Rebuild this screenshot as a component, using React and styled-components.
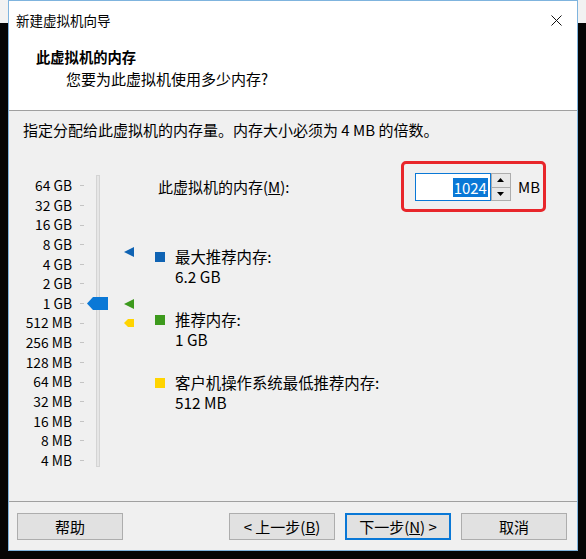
import styled, { createGlobalStyle } from "styled-components";

const ROW = 19.64;
const SCALE = ["64 GB", "32 GB", "16 GB", "8 GB", "4 GB", "2 GB", "1 GB", "512 MB", "256 MB", "128 MB", "64 MB", "32 MB", "16 MB", "8 MB", "4 MB"];

// position on the scale from a size in GB (64 GB at the top)
const posFor = (gb) => (6 - Math.log2(gb)) * ROW + ROW / 2;

const MARKERS = [
  { gb: 6.2, color: "#0f63b3", shape: "tri" },
  { gb: 1, color: "#3d9a1d", shape: "tri" },
  { gb: 0.5, color: "#ffd400", shape: "flag" },
];

const LEGEND = [
  { color: "#0f63b3", label: "最大推荐内存:", value: "6.2 GB" },
  { color: "#3d9a1d", label: "推荐内存:", value: "1 GB" },
  { color: "#ffd400", label: "客户机操作系统最低推荐内存:", value: "512 MB" },
];

export default function App() {
  return (
    <Page>
      <GlobalStyle />
      <Window>
        <Header>
          <TitleBar>
            <span>新建虚拟机向导</span>
            <CloseIcon width="11" height="11" viewBox="0 0 11 11">
              <path d="M0.5 0.5 L10.5 10.5 M10.5 0.5 L0.5 10.5" stroke="#111" strokeWidth="1" fill="none" />
            </CloseIcon>
          </TitleBar>
          <HeaderTitle>此虚拟机的内存</HeaderTitle>
          <HeaderSub>您要为此虚拟机使用多少内存?</HeaderSub>
        </Header>

        <Content>
          <Instruction>指定分配给此虚拟机的内存量。内存大小必须为 4 MB 的倍数。</Instruction>
          <Main>
            <SliderBlock>
              <ScaleList>
                {SCALE.map((s) => (
                  <ScaleRow key={s}>
                    <ScaleLabel>{s}</ScaleLabel>
                    <Tick />
                  </ScaleRow>
                ))}
              </ScaleList>
              <TrackWrap>
                <Track />
                <Thumb width="21" height="13" viewBox="0 0 21 13" style={{ top: posFor(1) - 6.5 }}>
                  <polygon points="0,6.5 6,0 21,0 21,13 6,13" fill="#0a78d6" />
                </Thumb>
              </TrackWrap>
              <MarkerCol>
                {MARKERS.map((m) => (
                  <Marker key={m.gb} width="10" height="10" viewBox="0 0 10 10" style={{ top: posFor(m.gb) - 5 }}>
                    <polygon
                      points={m.shape === "tri" ? "0,5 10,0 10,10" : "0,5 4,1 10,1 10,9 4,9"}
                      fill={m.color}
                    />
                  </Marker>
                ))}
              </MarkerCol>
            </SliderBlock>

            <RightCol>
              <MemoryRow>
                <MemoryLabel>
                  此虚拟机的内存(<u>M</u>):
                </MemoryLabel>
                <InputGroup>
                  <Highlight />
                  <NumberBox>
                    <Selected>1024</Selected>
                  </NumberBox>
                  <Spin>
                    <SpinBtn>
                      <svg width="7" height="4" viewBox="0 0 7 4">
                        <polygon points="0,4 3.5,0 7,4" fill="#000" />
                      </svg>
                    </SpinBtn>
                    <SpinBtn>
                      <svg width="7" height="4" viewBox="0 0 7 4">
                        <polygon points="0,0 7,0 3.5,4" fill="#000" />
                      </svg>
                    </SpinBtn>
                  </Spin>
                  <Unit>MB</Unit>
                </InputGroup>
              </MemoryRow>

              <Legend>
                {LEGEND.map((l) => (
                  <LegendItem key={l.label}>
                    <Swatch color={l.color} />
                    <div>
                      <div>{l.label}</div>
                      <div>{l.value}</div>
                    </div>
                  </LegendItem>
                ))}
              </Legend>
            </RightCol>
          </Main>
        </Content>

        <Footer>
          <Button>帮助</Button>
          <ButtonGroup>
            <Button>
              &lt; 上一步(<u>B</u>)
            </Button>
            <Button focused>
              下一步(<u>N</u>) &gt;
            </Button>
            <Button>取消</Button>
          </ButtonGroup>
        </Footer>
      </Window>
    </Page>
  );
}

const GlobalStyle = createGlobalStyle`
  body {
    margin: 0;
    font-family: "Microsoft YaHei UI", "Noto Sans CJK SC", sans-serif;
    font-size: 15px;
    color: #000;
  }
`;

const Page = styled.div`
  width: 586px;
  height: 559px;
  overflow: hidden;
  background: linear-gradient(#f2f2f2 0, #f2f2f2 23px, #050505 23px);
`;

const Window = styled.div`
  margin-left: 8px;
  width: 570px;
  height: 551px;
  box-sizing: border-box;
  border: 1px solid #7fb4de;
  background: #f0f0f0;
  display: flex;
  flex-direction: column;
`;

const Header = styled.div`
  background: #fff;
  height: 109px;
  border-bottom: 1px solid #a0a0a0;
`;

const TitleBar = styled.div`
  height: 38px;
  display: flex;
  align-items: center;
  justify-content: space-between;
  padding: 0 15px 0 7px;
  font-size: 13.5px;
  line-height: 20px;
`;

const CloseIcon = styled.svg`
  display: block;
`;

const HeaderTitle = styled.div`
  margin: 8px 0 0 27px;
  font-weight: bold;
  font-size: 14.3px;
  line-height: 20px;
`;

const HeaderSub = styled.div`
  margin: 2px 0 0 57px;
  line-height: 20px;
`;

const Content = styled.div`
  height: 391px;
  box-sizing: border-box;
  padding-top: 10px;
  border-bottom: 1px solid #a0a0a0;
`;

const Instruction = styled.div`
  padding-left: 14px;
  line-height: 18px;
`;

const Main = styled.div`
  margin-top: 34px;
  display: flex;
`;

const SliderBlock = styled.div`
  width: 146px;
  padding-top: 3px;
  display: flex;
`;

const ScaleList = styled.div`
  display: flex;
  flex-direction: column;
`;

const ScaleRow = styled.div`
  height: ${ROW}px;
  display: flex;
  align-items: center;
`;

const ScaleLabel = styled.div`
  width: 63px;
  text-align: right;
  font-size: 13.8px;
  line-height: ${ROW}px;
  white-space: nowrap;
`;

const Tick = styled.div`
  margin-left: 8px;
  width: 4px;
  height: 1px;
  background: #c4c4c4;
`;

const TrackWrap = styled.div`
  position: relative;
  width: 21px;
  margin-left: 3px;
  display: flex;
  justify-content: center;
`;

const Track = styled.div`
  margin-top: -1px;
  width: 2px;
  height: 290px;
  background: #e6e6e6;
  border: 1px solid #d4d4d4;
`;

const Thumb = styled.svg`
  position: absolute;
  left: 0;
  display: block;
`;

const MarkerCol = styled.div`
  position: relative;
  margin-left: 16px;
  width: 10px;
`;

const Marker = styled.svg`
  position: absolute;
  left: 0;
  display: block;
`;

const RightCol = styled.div`
  flex: 1;
  display: flex;
  flex-direction: column;
`;

const MemoryRow = styled.div`
  height: 28px;
  display: flex;
  align-items: center;
  justify-content: space-between;
  padding: 0 37px 0 3px;
`;

const MemoryLabel = styled.div`
  line-height: 20px;
`;

const InputGroup = styled.div`
  position: relative;
  display: flex;
  align-items: center;
  height: 28px;
`;

const Highlight = styled.div`
  position: absolute;
  left: -14px;
  right: -6px;
  top: -12px;
  bottom: -11px;
  border: 3px solid #e8262b;
  border-radius: 5px;
`;

const NumberBox = styled.div`
  width: 76px;
  height: 28px;
  box-sizing: border-box;
  border: 1px solid #0a78d6;
  background: #fff;
  display: flex;
  align-items: center;
  justify-content: flex-end;
  padding-right: 2px;
`;

const Selected = styled.span`
  background: #0a78d6;
  color: #fff;
  line-height: 19px;
  padding: 0 1px;
`;

const Spin = styled.div`
  width: 20px;
  height: 28px;
  display: flex;
  flex-direction: column;
`;

const SpinBtn = styled.div`
  flex: 1;
  box-sizing: border-box;
  border: 1px solid #adadad;
  background: #e8e8e8;
  display: flex;
  align-items: center;
  justify-content: center;

  & + & {
    border-top: none;
  }
`;

const Unit = styled.span`
  margin-left: 7px;
  line-height: 20px;
`;

const Legend = styled.div`
  margin-top: 45px;
  display: flex;
  flex-direction: column;
  gap: 23px;
  font-size: 15.4px;
  line-height: 20px;
`;

const LegendItem = styled.div`
  display: flex;
  align-items: flex-start;
  gap: 10px;
`;

const Swatch = styled.div`
  width: 10px;
  height: 10px;
  margin-top: 6px;
  background: ${(p) => p.color};
`;

const Footer = styled.div`
  flex: 1;
  display: flex;
  justify-content: space-between;
  align-items: flex-start;
  padding: 11px 10px 0 8px;
`;

const ButtonGroup = styled.div`
  display: flex;
  gap: 10px;
`;

const Button = styled.button`
  width: 106px;
  height: 27px;
  box-sizing: border-box;
  font: inherit;
  color: #000;
  background: #e1e1e1;
  border: ${(p) => (p.focused ? "2px solid #0a78d6" : "1px solid #adadad")};
  padding: 0;
  cursor: pointer;
`;
